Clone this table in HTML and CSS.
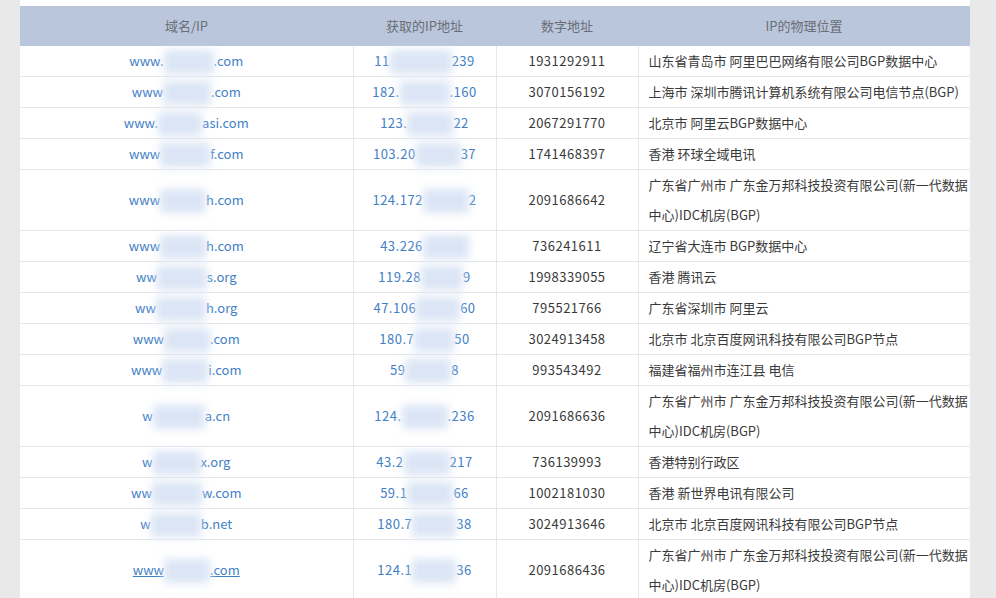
FILE: index.html
```html
<!DOCTYPE html>
<html lang="zh-CN">
<head>
<meta charset="utf-8">
<title>IP</title>
<link rel="stylesheet" href="styles.css">
</head>
<body>
<div class="page">
<table class="iptable">
<colgroup>
<col class="c1"><col class="c2"><col class="c3"><col class="c4">
</colgroup>
<thead>
<tr><th>域名/IP</th><th>获取的IP地址</th><th>数字地址</th><th>IP的物理位置</th></tr>
</thead>
<tbody>
<tr><td class="dom"><a>www.<span class="bl w50"></span>.com</a></td><td class="ip"><a>11<span class="bl w62"></span>239</a></td><td class="num">1931292911</td><td class="loc">山东省青岛市 阿里巴巴网络有限公司BGP数据中心</td></tr>
<tr><td class="dom"><a>www<span class="bl w48"></span>.com</a></td><td class="ip"><a>182.<span class="bl w50"></span>.160</a></td><td class="num">3070156192</td><td class="loc">上海市 深圳市腾讯计算机系统有限公司电信节点(BGP)</td></tr>
<tr><td class="dom"><a>www.<span class="bl w44"></span>asi.com</a></td><td class="ip"><a>123.<span class="bl w46"></span>22</a></td><td class="num">2067291770</td><td class="loc">北京市 阿里云BGP数据中心</td></tr>
<tr><td class="dom"><a>www<span class="bl w50"></span>f.com</a></td><td class="ip"><a>103.20<span class="bl w45"></span>37</a></td><td class="num">1741468397</td><td class="loc">香港 环球全域电讯</td></tr>
<tr class="tall"><td class="dom"><a>www<span class="bl w46"></span>h.com</a></td><td class="ip"><a>124.172<span class="bl w46"></span>2</a></td><td class="num">2091686642</td><td class="loc">广东省广州市 广东金万邦科技投资有限公司(新一代数据中心)IDC机房(BGP)</td></tr>
<tr><td class="dom"><a>www<span class="bl w46"></span>h.com</a></td><td class="ip"><a>43.226<span class="bl w46"></span></a></td><td class="num">736241611</td><td class="loc">辽宁省大连市 BGP数据中心</td></tr>
<tr><td class="dom"><a>ww<span class="bl w50"></span>s.org</a></td><td class="ip"><a>119.28<span class="bl w42"></span>9</a></td><td class="num">1998339055</td><td class="loc">香港 腾讯云</td></tr>
<tr><td class="dom"><a>ww<span class="bl w50"></span>h.org</a></td><td class="ip"><a>47.106<span class="bl w44"></span>60</a></td><td class="num">795521766</td><td class="loc">广东省深圳市 阿里云</td></tr>
<tr><td class="dom"><a>www<span class="bl w46"></span>.com</a></td><td class="ip"><a>180.7<span class="bl w40"></span>50</a></td><td class="num">3024913458</td><td class="loc">北京市 北京百度网讯科技有限公司BGP节点</td></tr>
<tr><td class="dom"><a>www<span class="bl w46"></span>i.com</a></td><td class="ip"><a>59<span class="bl w46"></span>8</a></td><td class="num">993543492</td><td class="loc">福建省福州市连江县 电信</td></tr>
<tr class="tall"><td class="dom"><a>w<span class="bl w52"></span>a.cn</a></td><td class="ip"><a>124.<span class="bl w46"></span>.236</a></td><td class="num">2091686636</td><td class="loc">广东省广州市 广东金万邦科技投资有限公司(新一代数据中心)IDC机房(BGP)</td></tr>
<tr><td class="dom"><a>w<span class="bl w48"></span>x.org</a></td><td class="ip"><a>43.2<span class="bl w46"></span>217</a></td><td class="num">736139993</td><td class="loc">香港特别行政区</td></tr>
<tr><td class="dom"><a>ww<span class="bl w50"></span>w.com</a></td><td class="ip"><a>59.1<span class="bl w46"></span>66</a></td><td class="num">1002181030</td><td class="loc">香港 新世界电讯有限公司</td></tr>
<tr><td class="dom"><a>w<span class="bl w50"></span>b.net</a></td><td class="ip"><a>180.7<span class="bl w44"></span>38</a></td><td class="num">3024913646</td><td class="loc">北京市 北京百度网讯科技有限公司BGP节点</td></tr>
<tr class="tall"><td class="dom"><a class="ul">www<span class="bl w46"></span>.com</a></td><td class="ip"><a>124.1<span class="bl w44"></span>36</a></td><td class="num">2091686436</td><td class="loc">广东省广州市 广东金万邦科技投资有限公司(新一代数据中心)IDC机房(BGP)</td></tr>
</tbody>
</table>
</div>
</body>
</html>
```

FILE: styles.css
```css
html, body {
  margin: 0;
  padding: 0;
  background: #e9e9e9;
  height: 100%;
  overflow: hidden;
}
body {
  font-family: "Noto Sans CJK SC", "Noto Sans", sans-serif;
  font-size: 13px;
}
.page {
  margin-left: 20px;
  width: 950px;
  background: #ffffff;
  padding-top: 6px;
  min-height: 100%;
  overflow: hidden;
}
.iptable {
  border-collapse: collapse;
  table-layout: fixed;
  width: 950px;
}
.c1 { width: 333px; }
.c2 { width: 143px; }
.c3 { width: 142px; }
.c4 { width: 332px; }
.iptable th {
  background: #b9c6dc;
  color: #6a6e76;
  font-weight: normal;
  height: 40px;
  padding: 0;
  line-height: 20px;
  text-align: center;
}
.iptable td {
  padding: 0;
  line-height: 30px;
  border-bottom: 1px solid #e6e6e9;
  border-left: 1px solid #e6e6e9;
  text-align: center;
  color: #3a3a3a;
  vertical-align: middle;
}
.iptable td:first-child {
  border-left: none;
}
.iptable td.loc {
  text-align: left;
  padding-left: 10px;
  padding-right: 0;
}
.iptable td.num {
  letter-spacing: 0.5px;
}
.iptable a {
  color: #4280c6;
  text-decoration: none;
}
.iptable td.ip a {
  letter-spacing: 0.5px;
}
.iptable a.ul {
  text-decoration: underline;
}
.bl {
  display: inline-block;
  height: 24px;
  vertical-align: middle;
  background: #dbe5f5;
  filter: blur(4px);
}
.w40 { width: 40px; }
.w42 { width: 42px; }
.w44 { width: 44px; }
.w45 { width: 45px; }
.w46 { width: 46px; }
.w48 { width: 48px; }
.w50 { width: 50px; }
.w52 { width: 52px; }
.w62 { width: 62px; }
```
